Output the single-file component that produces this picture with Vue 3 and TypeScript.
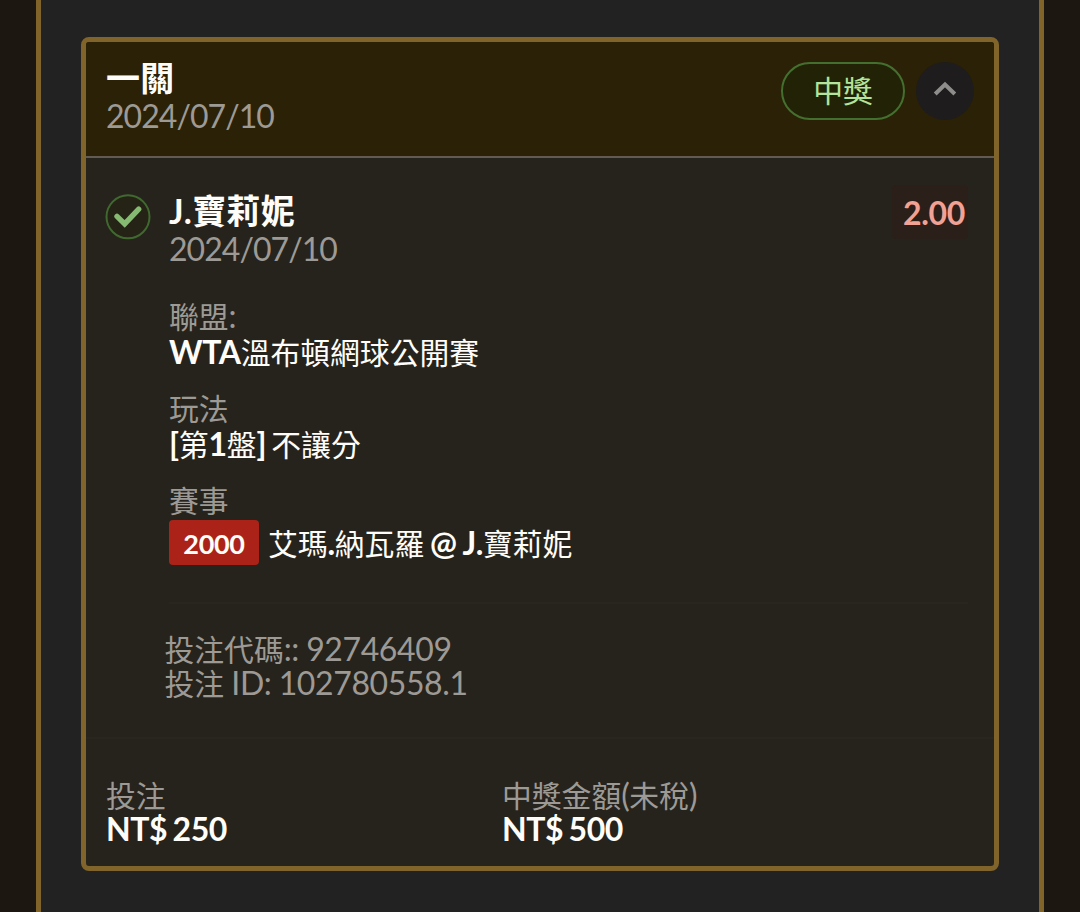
<script setup lang="ts">
import { h, type FunctionalComponent } from 'vue'

interface Detail {
  label: string
  value: string
  badge?: string
}

const details: Detail[] = [
  { label: '聯盟:', value: 'WTA溫布頓網球公開賽' },
  { label: '玩法', value: '[第1盤] 不讓分' },
  { label: '賽事', value: '艾瑪.納瓦羅 @ J.寶莉妮', badge: '2000' },
]

const codes: string[] = ['投注代碼:: 92746409', '投注 ID: 102780558.1']

const totals = [
  { label: '投注', value: 'NT$ 250' },
  { label: '中獎金額(未稅)', value: 'NT$ 500' },
]

/* Splits mixed text so Han and Latin runs can carry their own size and weight. */
const MixedText: FunctionalComponent<{ text: string }> = (props) =>
  (props.text.match(/[\u4e00-\u9fff]+|[^\u4e00-\u9fff]+/g) ?? []).map((run) =>
    h('span', { class: /[\u4e00-\u9fff]/.test(run) ? 'han' : 'latin' }, run),
  )
MixedText.props = ['text']
</script>

<template>
  <div class="page">
    <main class="panel">
      <article class="card">
        <header class="card-head">
          <div class="head-text">
            <h1 class="title">一關</h1>
            <p class="line muted date">2024/07/10</p>
          </div>
          <span class="status">中獎</span>
          <button class="toggle" type="button" aria-label="收合">
            <svg width="24" height="18" viewBox="0 0 24 18">
              <path d="M2.2 14 L12 4.5 L21.8 14" fill="none" stroke="#8f8c8c" stroke-width="4" />
            </svg>
          </button>
        </header>

        <section class="bet">
          <svg class="check" width="46" height="46" viewBox="0 0 46 46">
            <circle cx="23" cy="22.8" r="21.5" fill="#24240f" fill-opacity="0.45" stroke="#40692f" stroke-width="2" />
            <path d="M12 22.3 L19.7 29.9 L33.7 15.2" fill="none" stroke="#86b972" stroke-width="5.4" stroke-linecap="round" />
          </svg>
          <div class="bet-main">
            <div class="bet-top">
              <div>
                <h2 class="title">J.寶莉妮</h2>
                <p class="line muted date">2024/07/10</p>
              </div>
              <span class="odds">2.00</span>
            </div>
            <dl class="details">
              <div v-for="item in details" :key="item.label" class="detail">
                <dt class="line muted"><MixedText :text="item.label" /></dt>
                <dd class="value" :class="{ tagged: item.badge }">
                  <span v-if="item.badge" class="badge">{{ item.badge }}</span>
                  <span class="value-text"><MixedText :text="item.value" /></span>
                </dd>
              </div>
            </dl>
            <div class="codes">
              <p v-for="code in codes" :key="code" class="line muted"><MixedText :text="code" /></p>
            </div>
          </div>
        </section>

        <footer class="totals">
          <div v-for="total in totals" :key="total.label">
            <p class="line muted"><MixedText :text="total.label" /></p>
            <p class="line amount">{{ total.value }}</p>
          </div>
        </footer>
      </article>
    </main>
  </div>
</template>

<style>
body {
  background: #1c1811;
}
</style>

<style scoped>
.page {
  height: 912px;
  padding: 0 36px;
  box-sizing: border-box;
  overflow: hidden;
  background: #1c1811;
  color: #fffdf9;
  font-family: Lato, 'Noto Sans CJK TC', sans-serif;
  font-size: 32px;
  letter-spacing: -0.38px;
  word-spacing: -2.2px;
}
.panel {
  height: 912px;
  box-sizing: border-box;
  padding: 37px 40px 0;
  border: solid #80642a;
  border-width: 0 5px;
  background: #222222;
}
.card {
  height: 834px;
  box-sizing: border-box;
  border: 5px solid #80642a;
  border-radius: 8px;
  background: #26231d;
  overflow: hidden;
}
h1, h2, p, dl, dd {
  margin: 0;
}
.title {
  margin-top: 1px;
  font-size: 34px;
  font-weight: 700;
  letter-spacing: 0;
  line-height: 42px;
  height: 42px;
  white-space: nowrap;
}
h1.title {
  letter-spacing: 0.3px;
}
h2.title {
  letter-spacing: 0.3px;
}
.line {
  line-height: 34px;
  height: 34px;
  white-space: nowrap;
}
.date {
  letter-spacing: -0.95px;
}
.muted {
  color: #9d9a95;
}
:deep(.han) {
  font-size: 29.8px;
  font-weight: 400;
  letter-spacing: 0;
}
.card-head {
  display: flex;
  align-items: flex-start;
  height: 116px;
  box-sizing: border-box;
  padding: 20px 20px 0 20px;
  background: #2b2107;
  border-bottom: 2px solid #625b51;
}
.head-text {
  flex: 1;
  margin-top: -6px;
}
.status {
  width: 124px;
  height: 58px;
  box-sizing: border-box;
  border: 2px solid #44702f;
  border-radius: 30px;
  background: #212206;
  color: #b4e39b;
  font-size: 29.8px;
  letter-spacing: 0;
  line-height: 54px;
  text-align: center;
}
.toggle {
  display: flex;
  align-items: center;
  justify-content: center;
  width: 58px;
  height: 58px;
  margin-left: 11px;
  padding: 0 0 4px;
  box-sizing: border-box;
  border: 0;
  border-radius: 50%;
  background: #1e1c1c;
}
.bet {
  display: flex;
  height: 581px;
  box-sizing: border-box;
  padding: 31px 26px 0 19px;
  border-bottom: 2px solid #292620;
}
.check {
  flex: none;
  margin-top: 5px;
}
.bet-main {
  flex: 1;
  margin-left: 18px;
}
.bet-top {
  display: flex;
  justify-content: space-between;
  height: 110px;
}
.odds {
  width: 76px;
  height: 54px;
  margin-top: -4px;
  padding-left: 8px;
  box-sizing: border-box;
  border-radius: 4px;
  background: #2b1f19;
  color: #f2a295;
  font-weight: 700;
  line-height: 56px;
  text-align: center;
}
.detail {
  height: 92px;
}
.value {
  display: flex;
  align-items: center;
  height: 36px;
  margin-top: 1px;
  line-height: 36px;
  font-weight: 700;
  white-space: nowrap;
}
.value-text {
  white-space: pre;
}
.tagged {
  height: 45px;
  margin-top: 3px;
}
.tagged .value-text {
  padding-top: 1px;
  word-spacing: -1.6px;
}
.badge {
  width: 90px;
  height: 45px;
  margin-right: 9px;
  border-radius: 4px;
  background: #ab2318;
  font-size: 27px;
  letter-spacing: -0.3px;
  line-height: 47px;
  text-align: center;
}
.codes {
  margin-top: 27px;
  padding-top: 28px;
  border-top: 2px solid #292620;
  word-spacing: -0.6px;
}
.codes .line {
  margin-left: -4.5px;
}
.totals {
  display: grid;
  grid-template-columns: 396px 1fr;
  padding: 39px 20px 0;
}
.amount {
  font-weight: 700;
}
</style>
